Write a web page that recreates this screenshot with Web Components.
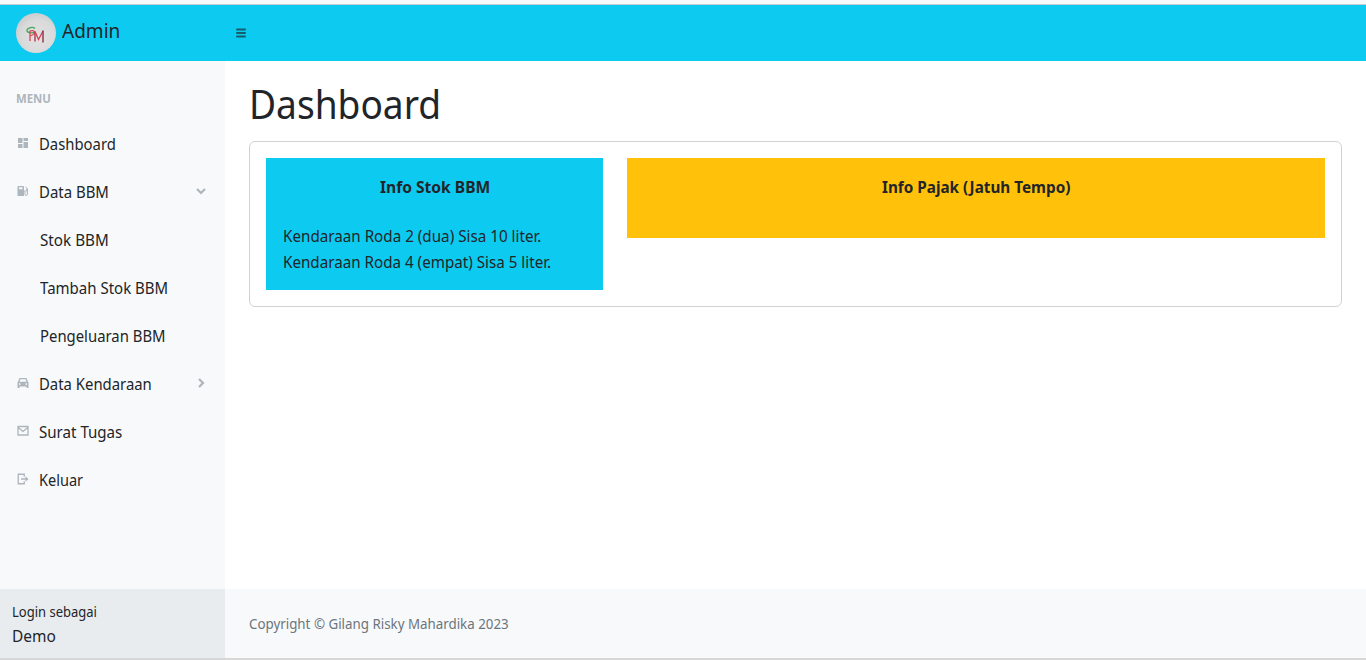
<!DOCTYPE html>
<html lang="id">
<head>
<meta charset="utf-8">
<title>Dashboard</title>
<style>
html,body{margin:0;height:100%;overflow:hidden}
body{font:400 16px/24px "Noto Sans","Open Sans",sans-serif;color:#212529;background:#fff}
</style>
</head>
<body>
<admin-layout>
  <top-bar slot="top"></top-bar>
  <side-menu slot="side">
    <menu-item icon="grid" width="77">Dashboard</menu-item>
    <menu-item icon="fuel" arrow="down" width="70">Data BBM</menu-item>
    <menu-item nested width="68.500">Stok BBM</menu-item>
    <menu-item nested width="128.500">Tambah Stok BBM</menu-item>
    <menu-item nested width="125.500">Pengeluaran BBM</menu-item>
    <menu-item icon="car" arrow="right" width="112.500">Data Kendaraan</menu-item>
    <menu-item icon="mail" width="83">Surat Tugas</menu-item>
    <menu-item icon="exit" width="44.500">Keluar</menu-item>
  </side-menu>
  <dash-board></dash-board>
</admin-layout>
<script>
const define = (name, html, setup) => customElements.define(name, class extends HTMLElement {
  constructor() {
    super();
    this.attachShadow({mode: 'open'}).innerHTML = html;
  }
  connectedCallback() { if (setup) setup(this, this.shadowRoot); }
});

const ICONS = {
  grid: '<path d="M2 2h9v10H2zM13 2h9v6h-9zM13 10h9v12h-9zM2 14h9v8H2z"/>',
  fuel: '<path fill-rule="evenodd" d="M1 4a2 2 0 0 1 2-2h9a2 2 0 0 1 2 2v18H1zM4 4.500v4h7v-4z"/><path fill="none" stroke="currentColor" stroke-width="2" d="M14 12h2v6.500a2.200 2.200 0 0 0 4.800 0V7.500L17 3.500M21 8.500h-2.500V12H21"/>',
  car: '<path fill-rule="evenodd" d="M6.500 2h11A2.500 2.500 0 0 1 20 3.700L21.500 9a2 2 0 0 1 1.500 2v11h-4v-3H5v3H1V11a2 2 0 0 1 1.500-2L4 3.700A2.500 2.500 0 0 1 6.500 2zM6.500 4.500L5 9.500h14l-1.500-5zM5.500 12.500a1.600 1.600 0 1 0 .01 0zM18.500 12.500a1.600 1.600 0 1 0 .01 0z"/>',
  mail: '<path fill="none" stroke="currentColor" stroke-width="2.600" d="M2 3h20v17H2zM3 5.500l9 7.500 9-7.500"/>',
  exit: '<path fill="none" stroke="currentColor" stroke-width="2.600" d="M14.500 7.500V2.500H2.500v19h12v-5M8 12h11"/><path d="M17 6.500l6 5.500-6 5.500z"/>',
  down: '<path fill="none" stroke="currentColor" stroke-width="4.500" d="M4 8l8 8 8-8"/>',
  right: '<path fill="none" stroke="currentColor" stroke-width="4.500" d="M8 4l8 8-8 8"/>',
  bars: '<path fill="none" stroke="currentColor" stroke-width="4" stroke-linecap="round" d="M4 5h16M4 12h16M4 19h16"/>'
};

define('ui-icon', `<style>
:host{display:block;width:12px;height:12px;flex:none}
svg{display:block;width:100%;height:100%;fill:currentColor}
</style><svg viewBox="0 0 24 24"></svg>`,
(el, root) => { root.querySelector('svg').innerHTML = ICONS[el.getAttribute('name')] || ''; });

/* A single line condensed or widened to occupy the given width. */
define('fit-text', `<style>
:host{display:inline-block;white-space:nowrap;text-align:left}
span{display:inline-block;transform-origin:0 50%}
</style><span><slot></slot></span>`,
(el, root) => {
  const span = root.querySelector('span');
  el.fit = () => {
    const target = parseFloat(el.getAttribute('width'));
    if (!target) return;
    const natural = span.offsetWidth;
    el.style.width = target + 'px';
    span.style.transform = `scaleX(${target / natural})`;
  };
  el.fit();
});

define('brand-logo', `<style>
:host{display:block;width:40px;height:40px;flex:none}
svg{display:block}
</style><svg width="40" height="40" viewBox="0 0 40 40" fill="none">
<defs><radialGradient id="g" cx=".55" cy=".6" r=".6"><stop offset="0" stop-color="#e2e2e3"/><stop offset=".7" stop-color="#dadadb"/><stop offset="1" stop-color="#cbcdce"/></radialGradient></defs>
<circle cx="20" cy="20" r="20" fill="url(#g)"/>
<path stroke="#43a95d" stroke-width="1.400" d="M19 15.500c-3-2.500-8.500 0-8 2.500.6 2 5 2.500 8 .8"/>
<path stroke="#da4a52" stroke-width="1.300" d="M14 28V18c4.500-2 7 3 0 4.800"/>
<path stroke="#a72d4b" stroke-width="1.300" d="M19 28.500V18.500"/>
<path stroke="#d94351" stroke-width="1.300" d="M19 18.500l3.500 8 4.500-8.500"/>
<path stroke="#8d3048" stroke-width="1.400" d="M27 17.500v12"/>
</svg>`);

define('top-bar', `<style>
:host{display:flex;flex-direction:column;height:61px;box-sizing:border-box;background:#0dcaf0;border-top:4px solid #f8f9fa}
.line{height:1px;background:#c3cccf}
.row{display:flex;height:56px;align-items:center}
.brand{display:flex;align-items:center;width:220px;padding-left:16px;gap:6px;font-size:20px;line-height:24px}
fit-text{padding-bottom:5px}
ui-icon{margin-left:-1px;color:#155d6c}
</style><div class="line"></div><div class="row">
<div class="brand"><brand-logo></brand-logo><fit-text width="58">Admin</fit-text></div>
<ui-icon name="bars"></ui-icon></div>`);

define('menu-item', `<style>
:host{display:flex;height:48px;align-items:center;padding:0 18px 0 17px}
:host([nested]){padding-left:39.500px}
:host([nested]) .lead{display:none}
ui-icon{color:#adb5bd;margin-bottom:2px}
.lead{margin-right:9.500px}
.arrow{margin-left:auto}
</style><ui-icon class="lead"></ui-icon><fit-text></fit-text>`,
(el, root) => {
  const lead = root.querySelector('.lead');
  if (el.hasAttribute('icon')) {
    const icon = document.createElement('ui-icon');
    icon.className = 'lead';
    icon.setAttribute('name', el.getAttribute('icon'));
    lead.replaceWith(icon);
  }
  const text = root.querySelector('fit-text');
  text.textContent = el.textContent;
  text.setAttribute('width', el.getAttribute('width'));
  text.fit();
  if (el.hasAttribute('arrow')) {
    const arrow = document.createElement('ui-icon');
    arrow.className = 'arrow';
    arrow.setAttribute('name', el.getAttribute('arrow'));
    root.append(arrow);
  }
});

define('side-menu', `<style>
:host{display:flex;flex-direction:column;background:#f8f9fa}
.head{padding:28px 0 12px 16px;height:19px;font-size:12px;line-height:19px;font-weight:700;color:#adb5bd}
nav{flex:1}
.user{box-sizing:border-box;height:69px;padding:11px 12px;background:#e9ecef;display:flex;flex-direction:column;font-size:16px;line-height:24px}
.small{font-size:14px}
</style><div class="head"><fit-text width="35">MENU</fit-text></div><nav><slot></slot></nav>
<div class="user"><div class="small"><fit-text width="84.500">Login sebagai</fit-text></div><div><fit-text width="43.500">Demo</fit-text></div></div>`);

define('info-box', `<style>
:host{display:block;box-sizing:border-box;padding:17px;background:var(--fill)}
.title{height:24px;font-weight:700;text-align:center;margin-bottom:24px}
.body{line-height:26px}
</style><div class="title"><slot name="title"></slot></div><div class="body"><slot></slot></div>`);

define('dash-board', `<style>
:host{display:flex;flex-direction:column}
main{flex:1;padding:19px 24px 0}
h1{margin:0 0 13px;font-size:40px;line-height:48px;font-weight:400}
.card{box-sizing:border-box;height:166px;border:1px solid #d1d2d3;border-radius:6px;padding:16px;display:grid;grid-template-columns:337px 698px;gap:24px;align-items:start}
.stock{height:132px;--fill:#0dcaf0}
.tax{height:80px;--fill:#ffc10a}
.stock fit-text{display:block}
.stock fit-text[slot]{display:inline-block}
footer{box-sizing:border-box;height:69px;padding:0 24px;background:#f8f9fa;color:#6c757d;font-size:14px;display:flex;align-items:center}
</style><main><h1><fit-text width="192">Dashboard</fit-text></h1>
<div class="card">
<info-box class="stock"><fit-text slot="title" width="110">Info Stok BBM</fit-text><fit-text width="258.500">Kendaraan Roda 2 (dua) Sisa 10 liter.</fit-text><fit-text width="268.500">Kendaraan Roda 4 (empat) Sisa 5 liter.</fit-text></info-box>
<info-box class="tax"><fit-text slot="title" width="188">Info Pajak (Jatuh Tempo)</fit-text></info-box>
</div></main>
<footer><fit-text width="260">Copyright © Gilang Risky Mahardika 2023</fit-text></footer>`);

define('admin-layout', `<style>
:host{display:grid;grid-template:61px 1fr / 225px 1fr;height:100vh;box-sizing:border-box;border-bottom:2px solid #d7d7d8}
slot[name=top]::slotted(*){grid-column:1 / -1}
</style><slot name="top"></slot><slot name="side"></slot><slot></slot>`);
</script>
</body>
</html>
